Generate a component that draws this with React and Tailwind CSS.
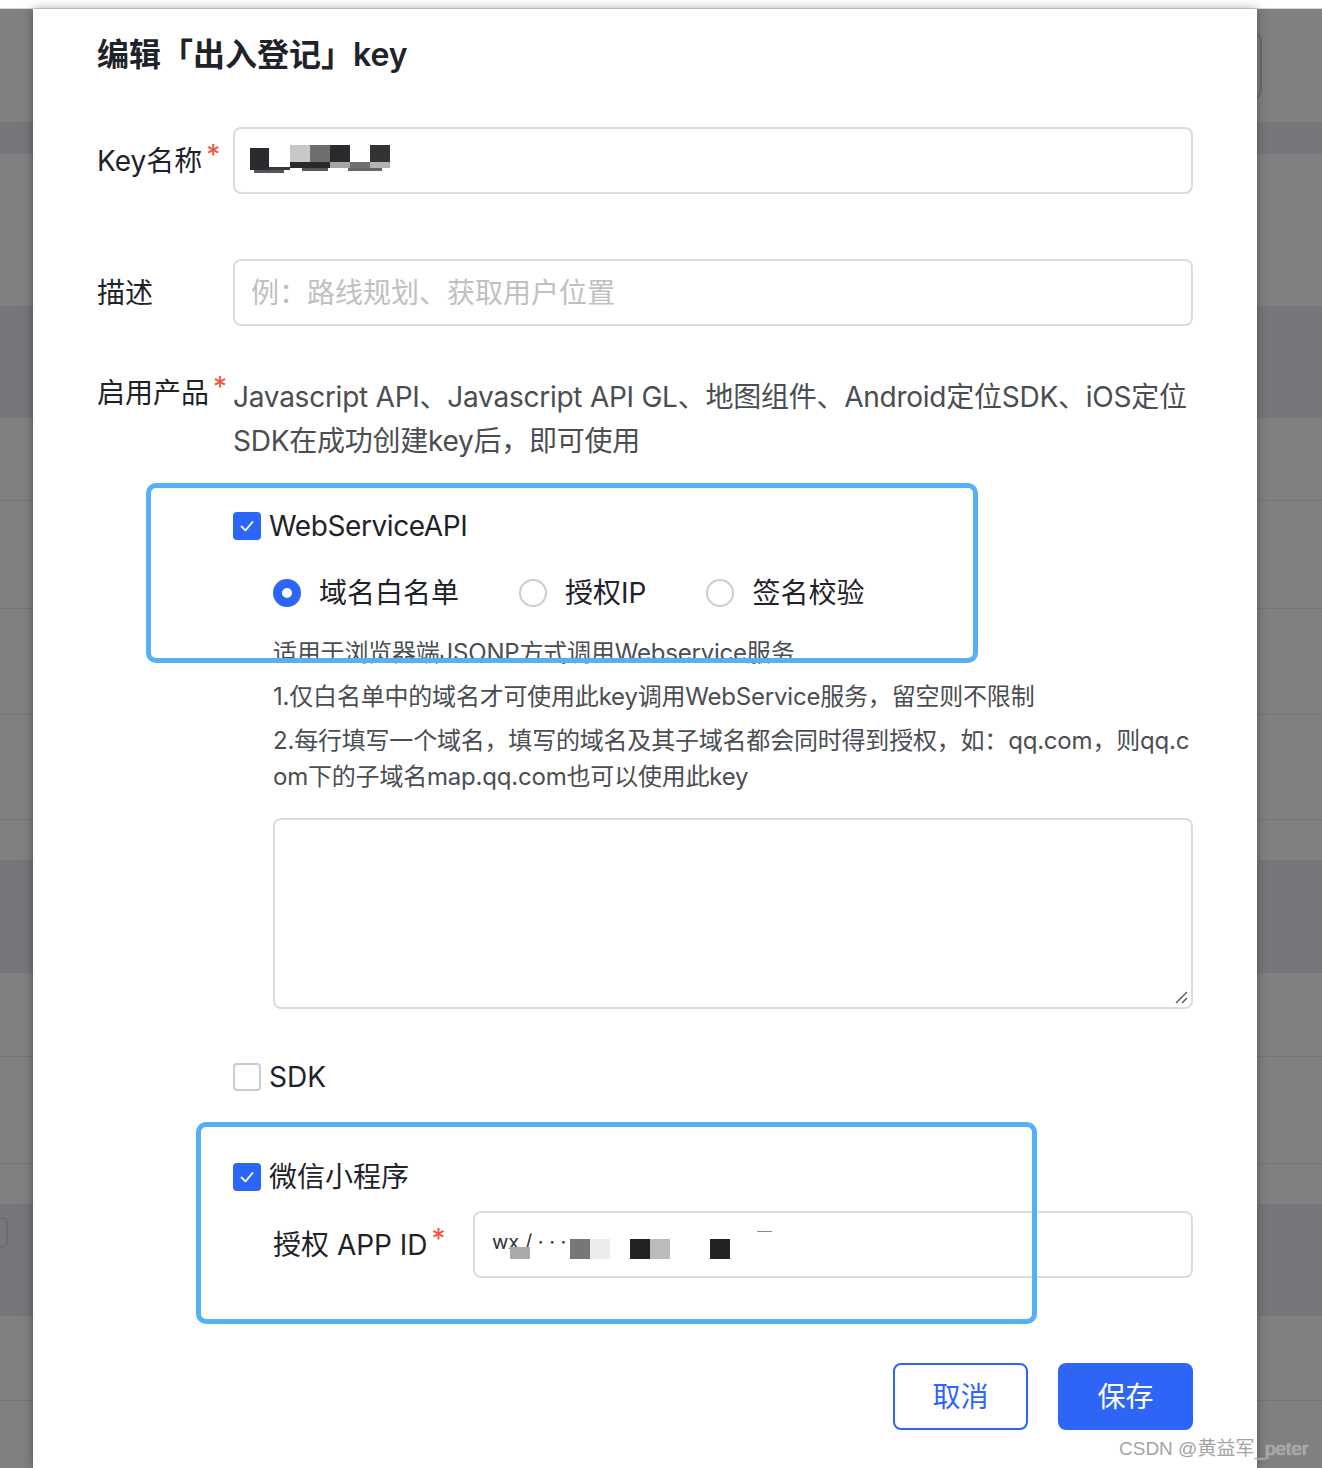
function Checkbox({ checked }) {
  if (checked) {
    return (
      <span className="flex h-[28px] w-[28px] shrink-0 items-center justify-center rounded-[4px] bg-[#2b66f6]">
        <svg width="18" height="18" viewBox="0 0 18 18">
          <path d="M3.5 9.5 L7.5 13.3 L14.5 5" fill="none" stroke="white" strokeWidth="1.8" strokeLinecap="round" strokeLinejoin="round" />
        </svg>
      </span>
    );
  }
  return <span className="h-[28px] w-[28px] shrink-0 rounded-[4px] border-2 border-[#c9cdd4] bg-white" />;
}

function Radio({ checked, label }) {
  return (
    <div className="flex items-center gap-[18px]">
      {checked ? (
        <span className="h-[28px] w-[28px] rounded-full border-[9px] border-[#2b66f6] bg-white" />
      ) : (
        <span className="h-[28px] w-[28px] rounded-full border-2 border-[#c9cdd4] bg-white" />
      )}
      <span className="text-[28px] leading-[44px] text-[#1f2329]">{label}</span>
    </div>
  );
}

function Required() {
  return <span className="ml-[4px] relative -top-[6px] text-[28px] text-[#f5533d]">*</span>;
}

export default function App() {
  return (
    <div className="relative h-[1468px] w-[1322px] overflow-hidden bg-[#808080] font-[family-name:Inter,'Noto_Sans_CJK_SC',sans-serif]">
      {/* backdrop rows */}
      <div className="flex flex-col">
        <div className="h-[8px] bg-white" />
        <div className="h-px bg-[#d9d9d9]" />
        <div className="h-[113px]" />
        <div className="h-[32px] bg-[#76777a]" />
        <div className="h-[152px]" />
        <div className="h-[112px] bg-[#76777a]" />
        <div className="h-[82px]" />
        <div className="h-px bg-[#767676]" />
        <div className="h-[107px]" />
        <div className="h-px bg-[#767676]" />
        <div className="h-[105px]" />
        <div className="h-px bg-[#767676]" />
        <div className="h-[104px]" />
        <div className="h-px bg-[#767676]" />
        <div className="h-[40px]" />
        <div className="h-[113px] bg-[#76777a]" />
        <div className="h-[83px]" />
        <div className="h-px bg-[#767676]" />
        <div className="h-[106px]" />
        <div className="h-px bg-[#767676]" />
        <div className="h-[40px]" />
        <div className="h-[112px] bg-[#76777a]" />
        <div className="h-[84px]" />
        <div className="h-px bg-[#767676]" />
      </div>
      <div className="absolute left-[1200px] top-[33px] h-[66px] w-[62px] rounded-[8px] border-2 border-[#6c6c6c]" />
      <div className="absolute -left-[40px] top-[1217px] h-[31px] w-[48px] rounded-[6px] border-2 border-[#6c6c6c]" />

      {/* modal */}
      <div className="absolute bottom-0 left-[33px] top-[9px] w-[1224px] bg-white px-[64px] pt-[24px] shadow-[0_0_10px_rgba(0,0,0,0.35)]">
        <h2 className="h-[44px] text-[32px] font-semibold leading-[44px] text-[#1f2329]">编辑「出入登记」key</h2>

        {/* Key name */}
        <div className="mt-[50px] flex items-center">
          <div className="flex w-[136px] shrink-0 items-center whitespace-nowrap text-[28px] text-[#1f2329]">
            Key名称<Required />
          </div>
          <div className="flex h-[67px] flex-1 items-center rounded-[8px] border-2 border-[#dcdcdc] pl-[15px]">
            <svg width="150" height="32" viewBox="0 0 150 32">
              <rect x="0" y="3" width="19" height="22" fill="#2a2a2e" />
              <rect x="19" y="22" width="21" height="3" fill="#3a3a3e" />
              <rect x="40" y="0" width="20" height="17" fill="#c8c8c8" />
              <rect x="60" y="0" width="20" height="17" fill="#6e6e6e" />
              <rect x="80" y="0" width="20" height="17" fill="#2a2a2e" />
              <rect x="120" y="0" width="20" height="17" fill="#333336" />
              <rect x="40" y="17" width="40" height="6" fill="#2a2a2e" />
              <rect x="80" y="17" width="20" height="6" fill="#a6a6a6" />
              <rect x="100" y="17" width="20" height="6" fill="#707070" />
              <rect x="120" y="17" width="20" height="6" fill="#b3b3b3" />
              <rect x="4" y="25" width="30" height="3" fill="#555" />
              <rect x="52" y="23" width="26" height="3" fill="#555" />
              <rect x="98" y="23" width="34" height="3" fill="#666" />
            </svg>
          </div>
        </div>

        {/* Description */}
        <div className="mt-[65px] flex items-center">
          <div className="w-[136px] shrink-0 text-[28px] text-[#1f2329]">描述</div>
          <div className="flex h-[67px] flex-1 items-center rounded-[8px] border-2 border-[#dcdcdc] pl-[16px] text-[28px] text-[#c0c0c0]">
            例：路线规划、获取用户位置
          </div>
        </div>

        {/* Products */}
        <div className="mt-[45px] flex items-start">
          <div className="flex w-[136px] shrink-0 items-center whitespace-nowrap text-[28px] leading-[44px] text-[#1f2329]">
            启用产品<Required />
          </div>
          <div className="mt-[4px] flex-1 whitespace-nowrap text-[28px] leading-[44px] tracking-[-0.25px] text-[#4a4d52]">
            <div>Javascript API、Javascript API GL、地图组件、Android定位SDK、iOS定位</div>
            <div>SDK在成功创建key后，即可使用</div>
          </div>
        </div>

        <div className="pl-[136px]">
          <div className="mt-[41px] flex h-[44px] items-center gap-[8px]">
            <Checkbox checked />
            <span className="text-[28px] tracking-[-0.4px] text-[#1f2329]">WebServiceAPI</span>
          </div>

          <div className="pl-[40px]">
            <div className="mt-[23px] flex h-[44px] items-center gap-[60px]">
              <Radio checked label="域名白名单" />
              <Radio label="授权IP" />
              <Radio label="签名校验" />
            </div>

            <div className="mt-[20px] flex flex-col gap-[8px] whitespace-nowrap text-[24px] leading-[36px] tracking-[-0.2px] text-[#4a4d52]">
              <div>适用于浏览器端JSONP方式调用Webservice服务</div>
              <div>1.仅白名单中的域名才可使用此key调用WebService服务，留空则不限制</div>
              <div>
                <div>2.每行填写一个域名，填写的域名及其子域名都会同时得到授权，如：qq.com，则qq.c</div>
                <div>om下的子域名map.qq.com也可以使用此key</div>
              </div>
            </div>

            <div className="relative mt-[23px] h-[191px] rounded-[8px] border-2 border-[#dcdcdc]">
              <svg className="absolute bottom-[3px] right-[3px]" width="14" height="14" viewBox="0 0 14 14">
                <path d="M2 13 L13 2 M8 13 L13 8" stroke="#555" strokeWidth="1.4" />
              </svg>
            </div>
          </div>

          <div className="mt-[46px] flex h-[44px] items-center gap-[8px]">
            <Checkbox />
            <span className="text-[28px] text-[#1f2329]">SDK</span>
          </div>

          <div className="mt-[56px] flex h-[44px] items-center gap-[8px]">
            <Checkbox checked />
            <span className="text-[28px] text-[#1f2329]">微信小程序</span>
          </div>

          <div className="mt-[12px] flex items-center pl-[40px]">
            <div className="flex w-[200px] shrink-0 items-center whitespace-nowrap text-[28px] text-[#1f2329]">
              授权 APP ID<Required />
            </div>
            <div className="flex h-[67px] flex-1 items-center rounded-[8px] border-2 border-[#dcdcdc] pl-[15px]">
              <svg width="300" height="36" viewBox="0 0 300 36">
                <text x="2" y="22" fontSize="20" fill="#333" fontFamily="Inter, sans-serif">wx / · · ·</text>
                <rect x="20" y="20" width="20" height="12" fill="#aaaaaa" />
                <rect x="80" y="12" width="20" height="20" fill="#777777" />
                <rect x="100" y="12" width="20" height="20" fill="#ececec" />
                <rect x="140" y="12" width="20" height="20" fill="#222226" />
                <rect x="160" y="12" width="20" height="20" fill="#bbbbbb" />
                <rect x="220" y="12" width="20" height="20" fill="#222226" />
                <rect x="267" y="4" width="15" height="1" fill="#888" />
              </svg>
            </div>
          </div>
        </div>

        {/* footer */}
        <div className="mt-[85px] flex justify-end gap-[30px]">
          <button className="flex h-[67px] w-[135px] items-center justify-center rounded-[8px] border-2 border-[#2d66f6] bg-white text-[28px] text-[#2d66f6]">
            取消
          </button>
          <button className="flex h-[67px] w-[135px] items-center justify-center rounded-[8px] bg-[#2d66f6] text-[28px] text-white">
            保存
          </button>
        </div>
      </div>

      {/* annotation boxes */}
      <div className="absolute left-[146px] top-[483px] z-10 h-[180px] w-[832px] rounded-[10px] border-[5px] border-[#56b0f6]" />
      <div className="absolute left-[196px] top-[1122px] z-10 h-[202px] w-[841px] rounded-[10px] border-[5px] border-[#56b0f6]" />

      <div className="absolute left-[1119px] top-[1435px] z-10 font-[family-name:'Liberation_Sans','Noto_Sans_CJK_SC',sans-serif] text-[19px] text-[#a3a3a3] [text-shadow:0_0_1px_rgba(255,255,255,0.8)]">
        CSDN @黄益军_peter
      </div>
    </div>
  );
}
